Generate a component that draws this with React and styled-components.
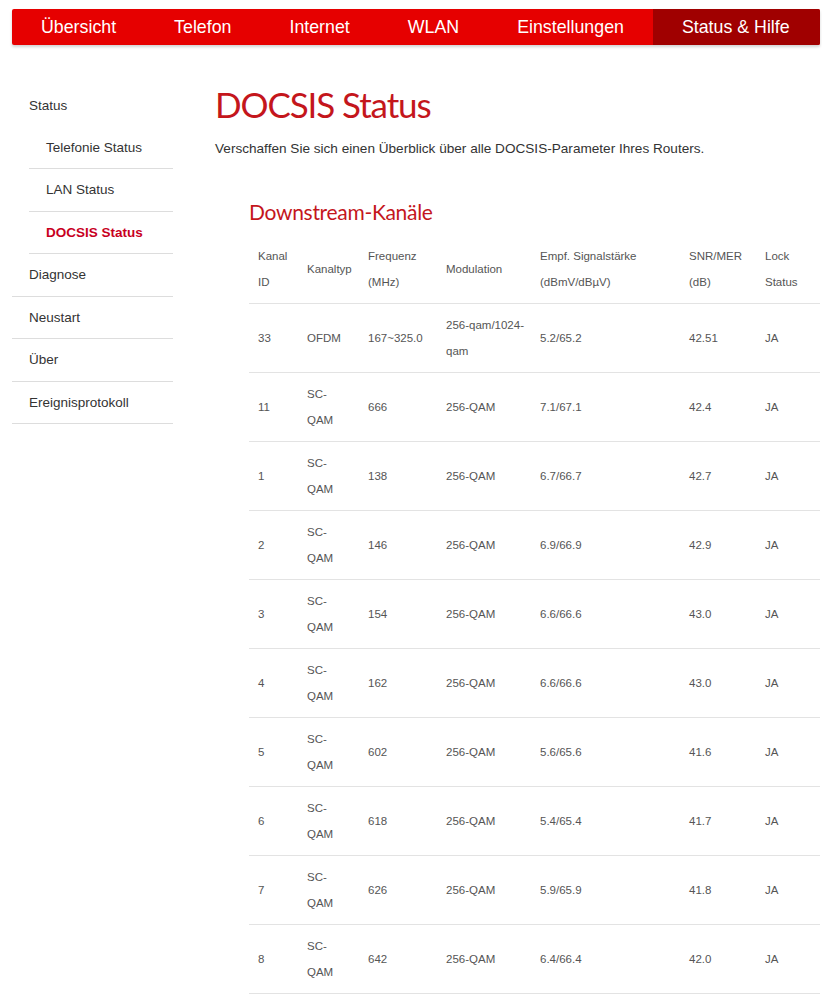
import React from "react";
import styled, { createGlobalStyle } from "styled-components";

const Global = createGlobalStyle`
  html, body { margin: 0; padding: 0; background: #fff; }
  body { font-family: "Liberation Sans", Arial, sans-serif; color: #333; }
`;

const Page = styled.div`
  width: 822px;
  padding: 9px 0 0 12px;
  box-sizing: border-box;
`;

const NavBar = styled.nav`
  display: flex;
  width: 808px;
  height: 36px;
  background: #e60000;
  border-radius: 2px;
  box-shadow: 0 2px 3px rgba(0, 0, 0, 0.18);
  overflow: hidden;
`;

const NavItem = styled.a`
  display: flex;
  align-items: center;
  padding: 0 29px;
  font-size: 17.8px;
  color: #fff;
  text-decoration: none;
  white-space: nowrap;
  background: ${(p) => (p.$active ? "#a00000" : "transparent")};
  flex: ${(p) => (p.$active ? "1" : "0 0 auto")};
`;

const Body = styled.div`
  display: flex;
  margin-top: 39px;
  gap: 42px;
`;

const Side = styled.ul`
  list-style: none;
  margin: 0;
  padding: 0;
  width: 161px;
  flex: 0 0 auto;
`;

const SideItem = styled.li`
  display: flex;
  align-items: center;
  height: 42.5px;
  box-sizing: border-box;
  margin-left: ${(p) => (p.$sub ? "17px" : "0")};
  padding-left: 17px;
  border-bottom: ${(p) => (p.$noLine ? "none" : "1px solid #ddd")};
  font-size: 13.5px;
  color: ${(p) => (p.$active ? "#c8001e" : "#333")};
  font-weight: ${(p) => (p.$active ? "bold" : "normal")};
`;

const Main = styled.main`
  flex: 1;
  min-width: 0;
`;

const Title = styled.h1`
  margin: -2px 0 0;
  font-family: Lato, "Open Sans", sans-serif;
  font-weight: 400;
  font-size: 35px;
  letter-spacing: -1.1px;
  line-height: 44px;
  color: #c4161c;
`;

const Lead = styled.p`
  margin: 15px 0 0;
  font-size: 13.6px;
  color: #333;
`;

const Section = styled.section`
  margin: 42px 0 0 34px;
`;

const SubTitle = styled.h2`
  margin: 0;
  font-family: Lato, "Open Sans", sans-serif;
  font-weight: 400;
  font-size: 21px;
  letter-spacing: -0.3px;
  line-height: 28px;
  color: #c4161c;
`;

const Table = styled.table`
  margin-top: 9px;
  width: 571px;
  table-layout: fixed;
  border-collapse: collapse;
  font-size: 11.5px;
  color: #555;
`;

const Th = styled.th`
  box-sizing: border-box;
  text-align: left;
  font-weight: normal;
  padding: 8px 9px;
  line-height: 26px;
  vertical-align: middle;
  white-space: nowrap;
  border-bottom: 1px solid #e3e3e3;
  width: ${(p) => p.$w};
`;

const Td = styled.td`
  padding: 8px 9px;
  line-height: 26px;
  height: 52px;
  vertical-align: middle;
  white-space: nowrap;
  border-bottom: 1px solid #e3e3e3;
`;

const navItems = ["Übersicht", "Telefon", "Internet", "WLAN", "Einstellungen", "Status & Hilfe"];

const cols = [
  ["49px", <>Kanal<br />ID</>],
  ["61px", "Kanaltyp"],
  ["78px", <>Frequenz<br />(MHz)</>],
  ["94px", "Modulation"],
  ["149px", <>Empf. Signalstärke<br />(dBmV/dBµV)</>],
  ["76px", <>SNR/MER<br />(dB)</>],
  ["64px", <>Lock<br />Status</>],
];

const rows = [
  ["33", "OFDM", "167~325.0", "256-qam/1024-qam", "5.2/65.2", "42.51", "JA"],
  ["11", "SC-QAM", "666", "256-QAM", "7.1/67.1", "42.4", "JA"],
  ["1", "SC-QAM", "138", "256-QAM", "6.7/66.7", "42.7", "JA"],
  ["2", "SC-QAM", "146", "256-QAM", "6.9/66.9", "42.9", "JA"],
  ["3", "SC-QAM", "154", "256-QAM", "6.6/66.6", "43.0", "JA"],
  ["4", "SC-QAM", "162", "256-QAM", "6.6/66.6", "43.0", "JA"],
  ["5", "SC-QAM", "602", "256-QAM", "5.6/65.6", "41.6", "JA"],
  ["6", "SC-QAM", "618", "256-QAM", "5.4/65.4", "41.7", "JA"],
  ["7", "SC-QAM", "626", "256-QAM", "5.9/65.9", "41.8", "JA"],
  ["8", "SC-QAM", "642", "256-QAM", "6.4/66.4", "42.0", "JA"],
];

const split = (s) => {
  if (s === "SC-QAM") return <>SC-<br />QAM</>;
  if (s === "256-qam/1024-qam") return <>256-qam/1024-<br />qam</>;
  return s;
};

export default function App() {
  return (
    <>
      <Global />
      <Page>
        <NavBar>
          {navItems.map((n, i) => (
            <NavItem key={n} $active={i === navItems.length - 1}>{n}</NavItem>
          ))}
        </NavBar>
        <Body>
          <Side>
            <SideItem $noLine>Status</SideItem>
            <SideItem $sub>Telefonie Status</SideItem>
            <SideItem $sub>LAN Status</SideItem>
            <SideItem $sub $active>DOCSIS Status</SideItem>
            <SideItem>Diagnose</SideItem>
            <SideItem>Neustart</SideItem>
            <SideItem>Über</SideItem>
            <SideItem>Ereignisprotokoll</SideItem>
          </Side>
          <Main>
            <Title>DOCSIS Status</Title>
            <Lead>Verschaffen Sie sich einen Überblick über alle DOCSIS-Parameter Ihres Routers.</Lead>
            <Section>
              <SubTitle>Downstream-Kanäle</SubTitle>
              <Table>
                <thead>
                  <tr>
                    {cols.map(([w, label], i) => (
                      <Th key={i} $w={w}>{label}</Th>
                    ))}
                  </tr>
                </thead>
                <tbody>
                  {rows.map((r, i) => (
                    <tr key={i}>
                      {r.map((c, j) => (
                        <Td key={j}>{split(c)}</Td>
                      ))}
                    </tr>
                  ))}
                </tbody>
              </Table>
            </Section>
          </Main>
        </Body>
      </Page>
    </>
  );
}
